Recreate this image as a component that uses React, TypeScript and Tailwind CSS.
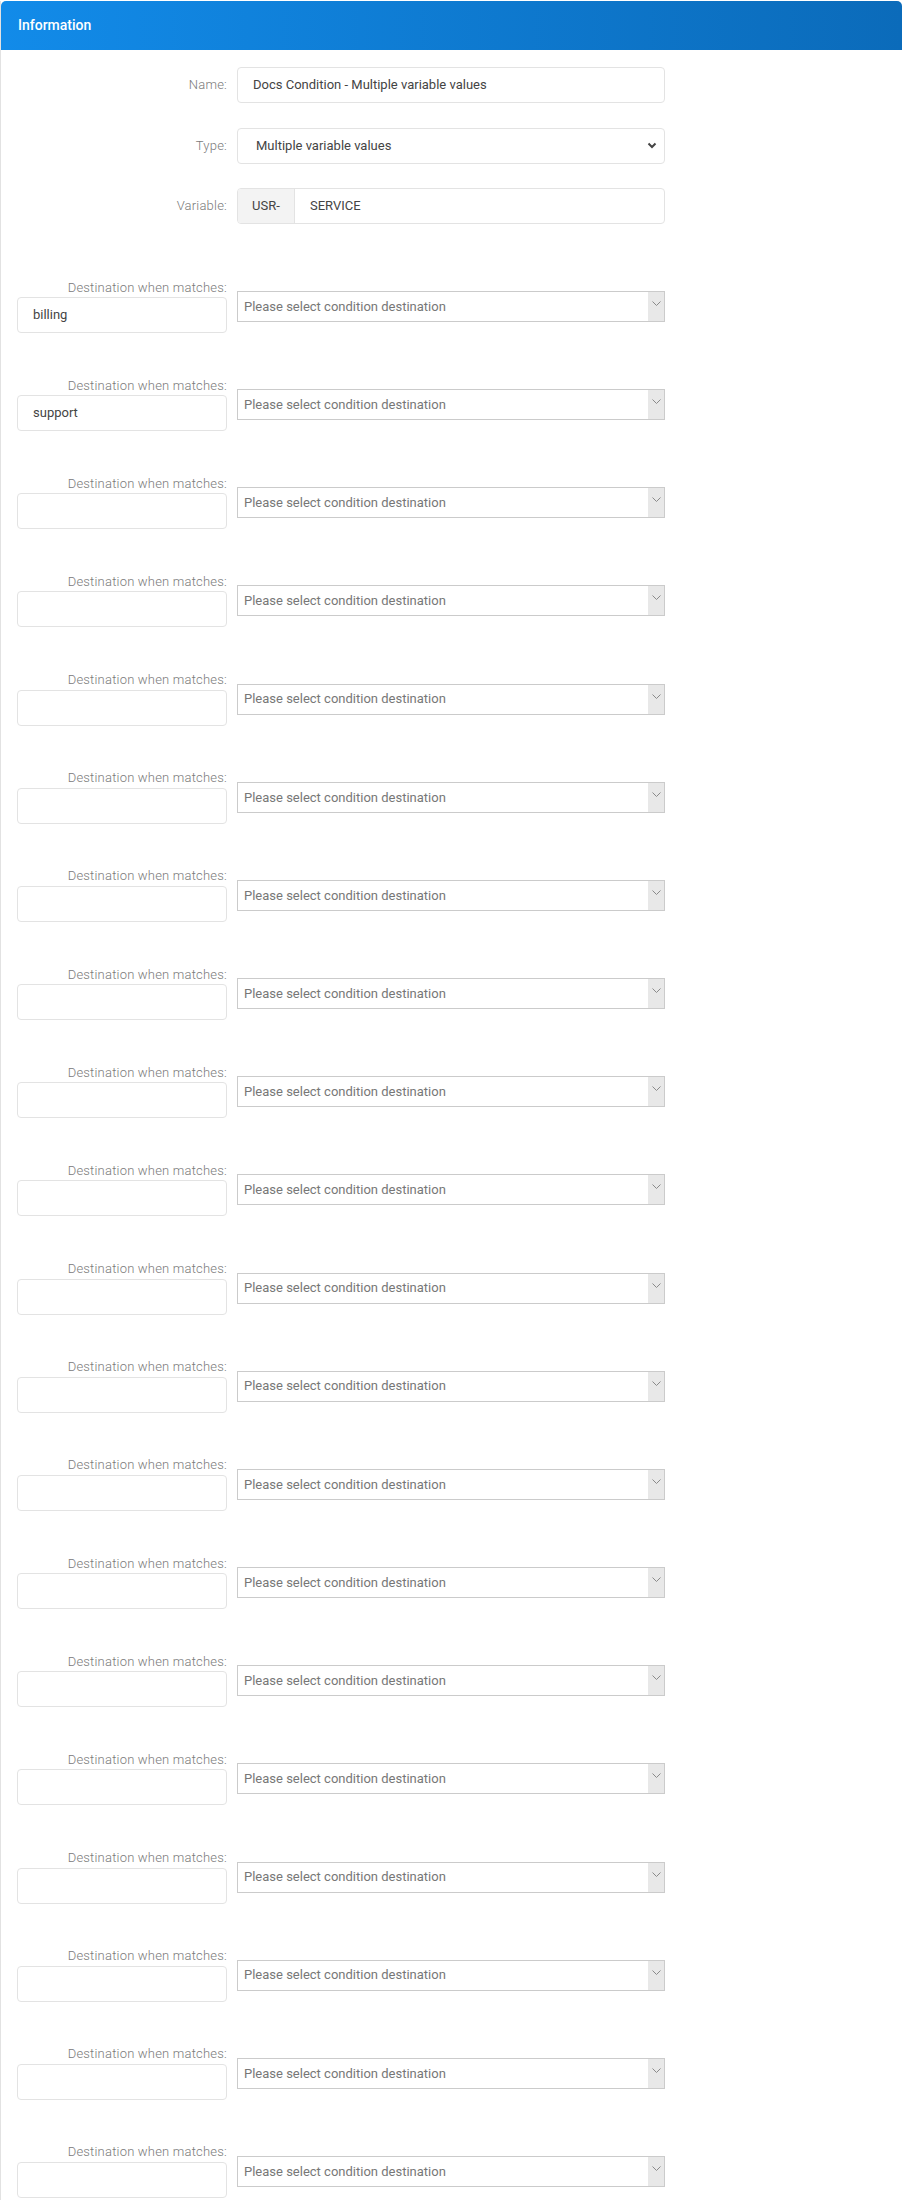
import React from "react";

const destinations = [
  "billing",
  "support",
  ...Array.from({ length: 18 }, () => ""),
];

function Chevron() {
  return (
    <svg width="10" height="7" viewBox="0 0 10 7" className="block">
      <polyline points="1.5,1.5 5,5 8.5,1.5" fill="none" stroke="#444" strokeWidth="2" />
    </svg>
  );
}

function ThinChevron() {
  return (
    <svg width="9" height="6" viewBox="0 0 9 6" className="block">
      <polyline points="0.5,0.5 4.5,4.5 8.5,0.5" fill="none" stroke="#8a8a8a" strokeWidth="1" />
    </svg>
  );
}

function FieldRow({ label, children }: { label: string; children: React.ReactNode }) {
  return (
    <div className="grid grid-cols-[210px_428px] gap-x-[10px] items-center">
      <div className="text-right text-[13px] text-[#7a7a7a] font-light tracking-[0.2px]">{label}</div>
      {children}
    </div>
  );
}

function DestinationRow({ value }: { value: string }) {
  return (
    <div className="grid grid-cols-[210px_428px] gap-x-[10px] items-start">
      <div className="flex flex-col">
        <div className="h-[17px] leading-[17px] text-right text-[13px] text-[#7a7a7a] font-light tracking-[0.2px]">
          Destination when matches:
        </div>
        <div className="mt-[1.5px] h-[36px] border border-[#e3e3e3] rounded-[4px] bg-white flex items-center pl-[15px] text-[13px] text-[#444]">
          {value}
        </div>
      </div>
      <div className="mt-[12.5px] h-[31px] border border-[#cbcbcb] bg-white flex items-stretch">
        <div className="flex-1 flex items-center pl-[6px] text-[13px] text-[#777]">
          Please select condition destination
        </div>
        <div className="w-[16px] bg-[#e8e8e8] flex items-center justify-center pb-[5px]">
          <ThinChevron />
        </div>
      </div>
    </div>
  );
}

export default function App() {
  return (
    <div className="bg-white min-h-[2200px]" style={{ fontFamily: "Roboto, 'Liberation Sans', sans-serif" }}>
      <div className="border-l border-[#e2e2e2] min-h-[2200px]">
        <div className="mt-px h-[49px] rounded-t-[5px] bg-gradient-to-r from-[#128be9] to-[#0b6bba] flex items-center pl-[17px]">
          <span className="text-white text-[14px] font-medium">Information</span>
        </div>

        <div className="pl-[16px] pt-[17px] flex flex-col gap-[24.5px]">
          <FieldRow label="Name:">
            <div className="h-[36px] border border-[#e3e3e3] rounded-[4px] flex items-center pl-[15px] text-[13px] text-[#444]">
              Docs Condition - Multiple variable values
            </div>
          </FieldRow>
          <FieldRow label="Type:">
            <div className="h-[36px] border border-[#e3e3e3] rounded-[4px] flex items-center justify-between pl-[18px] pr-[7px] text-[13px] text-[#444]">
              <span>Multiple variable values</span>
              <Chevron />
            </div>
          </FieldRow>
          <FieldRow label="Variable:">
            <div className="h-[36px] border border-[#e3e3e3] rounded-[4px] flex items-stretch text-[13px] text-[#444] overflow-hidden">
              <div className="w-[57px] bg-[#f3f3f3] border-r border-[#e3e3e3] flex items-center justify-center">
                USR-
              </div>
              <div className="flex items-center pl-[15px]">SERVICE</div>
            </div>
          </FieldRow>
        </div>

        <div className="pl-[16px] mt-[54.5px] flex flex-col gap-[43.66px] pb-8">
          {destinations.map((d, i) => (
            <DestinationRow key={i} value={d} />
          ))}
        </div>
      </div>
    </div>
  );
}
